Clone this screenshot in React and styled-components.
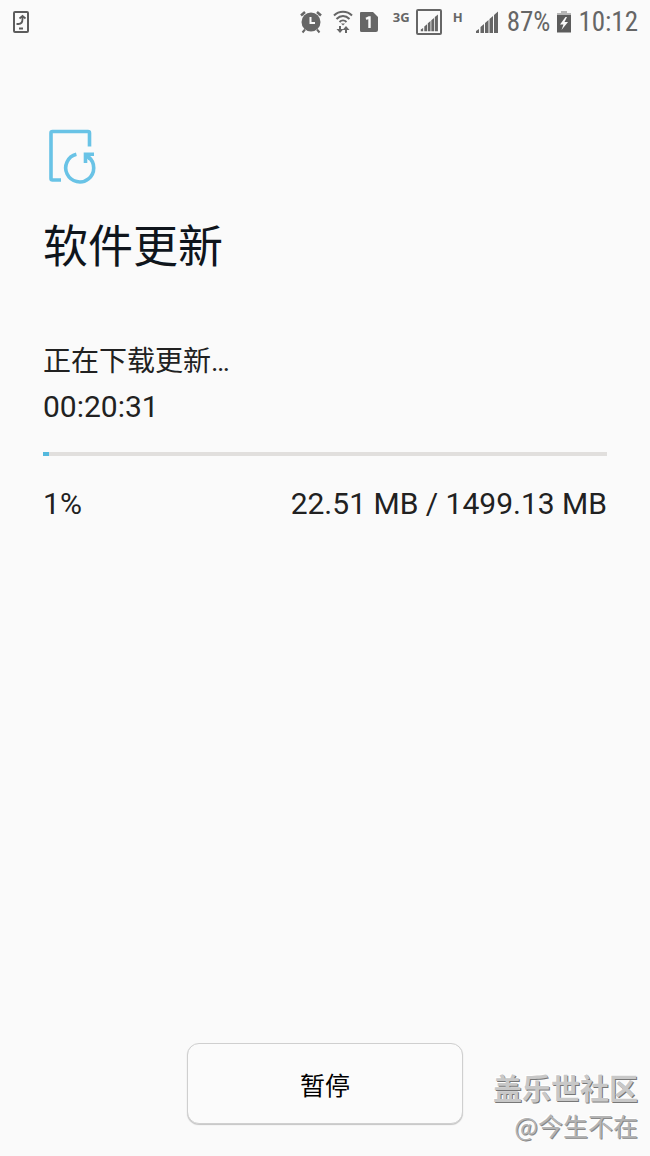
// src/App.jsx
// Software update screen: download progress with a pause button

import { useState } from "react";
import styled, { createGlobalStyle } from "styled-components";

const UPDATE = { percent: 1, timeLeft: "00:20:31", done: "22.51 MB", total: "1499.13 MB" };

function UpdateNoticeIcon() {
  return (
    <svg width="18" height="22" viewBox="0 0 18 22" fill="none" stroke="#5c5c5c" strokeWidth="2" aria-hidden="true">
      <rect x="2" y="1" width="14" height="20" rx="1" />
      <path d="M4.500 13h2c3 0 4-2 4-5V5M7.500 7.500 10.500 5l3 2.500" strokeWidth="1.800" />
      <path d="M7 17.500h4" />
    </svg>
  );
}

function AlarmIcon() {
  return (
    <svg width="22" height="24" viewBox="0 0 22 24" fill="none" stroke="#666" aria-hidden="true">
      <circle cx="11" cy="12" r="9.500" fill="#666" stroke="none" />
      <path d="M1 5.500 5 2M21 5.500 17 2" strokeWidth="2.500" />
      <path d="M5 19.500 2.500 22.500M17 19.500l2.500 3" strokeWidth="2" />
      <path d="M10.500 7v6H15" stroke="#fafafa" strokeWidth="2" />
    </svg>
  );
}

function WifiIcon() {
  return (
    <svg width="20" height="24" viewBox="0 0 20 24" fill="none" stroke="#666" strokeWidth="2" aria-hidden="true">
      <path d="M1 5.500C6 .500 14 .500 19 5.500M3.500 9c4-4 9-4 13 0M6.500 12c2-2 5-2 7 0" />
      <path d="M8 13.500h4l-2 2z" fill="#666" stroke="none" />
      <path d="M7 16v4M13 23v-4" />
      <path d="M3.500 19h7L7 23zM9.500 20h7L13 16z" fill="#666" stroke="none" />
    </svg>
  );
}

function SimIcon() {
  return (
    <svg width="20" height="22" viewBox="0 0 20 22" aria-hidden="true">
      <path d="M2 1h12l5 5v13a2 2 0 0 1-2 2H2.500A1.500 1.500 0 0 1 1 19.500V2a1 1 0 0 1 1-1z" fill="#666" />
      <path d="M7 7.800 10 6.500h.500V17" fill="none" stroke="#fafafa" strokeWidth="2.400" />
    </svg>
  );
}

function SignalIcon({ framed }) {
  return (
    <svg width="26" height="26" viewBox="0 0 26 26" fill="#666" aria-hidden="true">
      {framed && <rect x="1" y="1" width="24" height="24" rx="1" fill="none" stroke="#666" strokeWidth="2" />}
      <g transform={framed ? "translate(4 5) scale(.78)" : "translate(2 2)"}>
        <path d="M1 22v-2l3-2v4zM5.500 22v-6l3.500-3V22zM10 22V12l3.500-3v13zM14.500 22V8L18 5v17zM19 22V4L23 .500V22z" />
      </g>
    </svg>
  );
}

function BatteryIcon() {
  return (
    <svg width="16" height="22" viewBox="0 0 16 22" aria-hidden="true">
      <path d="M5 0h6v2h4v3H1V2h4z" fill="#b5b5b5" />
      <path d="M1 4h14v17.500H1z" fill="#5c5c5c" />
      <path d="M9.500 6 4 13.500h3.500L5.500 19l6.500-8H8.500L11 6z" fill="#fafafa" />
    </svg>
  );
}

function UpdateIcon() {
  return (
    <svg width="48" height="56" viewBox="0 0 48 56" fill="none" stroke="#69c3e6" strokeWidth="3.600" aria-hidden="true">
      <path d="M13 52H4.500A1.500 1.500 0 0 1 3 50.500V5A1.500 1.500 0 0 1 4.500 3.500H40A1.500 1.500 0 0 1 41.500 5v13.500" />
      <path d="M28.400 26.300A14 14 0 1 0 40.500 29" />
      <path d="M37.500 35V26.300H46" />
      <path d="m38 27 4 4" />
    </svg>
  );
}

export default function App() {
  const [paused, setPaused] = useState(false);

  return (
    <>
      <GlobalStyle />
      <Screen>
        <StatusBar>
          <UpdateNoticeIcon />
          <StatusGroup>
            <Indicators>
              <AlarmIcon />
              <Connections>
                <WifiIcon />
                <SimIcon />
              </Connections>
            </Indicators>
            <Network>
              <NetworkType>3G</NetworkType>
              <SignalIcon framed />
            </Network>
            <Network $wide>
              <NetworkType>H</NetworkType>
              <SignalIcon />
            </Network>
            <Power>
              <span>87%</span>
              <BatteryIcon />
              <time>10:12</time>
            </Power>
          </StatusGroup>
        </StatusBar>

        <Content>
          <UpdateIcon />
          <Title>软件更新</Title>
          <Status id="download-status">正在下载更新…</Status>
          <TimeLeft>{UPDATE.timeLeft}</TimeLeft>
          <Progress value={UPDATE.percent} max="100" aria-labelledby="download-status" />
          <Amounts>
            <span>{UPDATE.percent}%</span>
            <span>{UPDATE.done} / {UPDATE.total}</span>
          </Amounts>
        </Content>

        <Footer>
          <PauseButton type="button" aria-pressed={paused} onClick={() => setPaused(!paused)}>
            暂停
          </PauseButton>
        </Footer>

        <Watermark>
          <Community>盖乐世社区</Community>
          <Author>@今生不在</Author>
        </Watermark>
      </Screen>
    </>
  );
}

const GlobalStyle = createGlobalStyle`
  * { box-sizing: border-box; }
  body { margin: 0; background: #fafafa; font-family: Roboto, "Noto Sans CJK SC", sans-serif; color: #212121; }
  svg { display: block; flex-shrink: 0; }
`;

const Screen = styled.div`
  position: relative; display: flex; flex-direction: column; min-height: 100vh;
`;

const StatusBar = styled.header`
  display: flex; align-items: center; justify-content: space-between;
  height: 44px; padding: 0 12px; color: #666;
`;
const StatusGroup = styled.div`display: flex; align-items: center; gap: 8px;`;
const Indicators = styled.div`display: flex; align-items: center; gap: 11px;`;
const Connections = styled.div`display: flex; align-items: center; gap: 6px;`;
const Network = styled.div`
  display: flex; align-items: center; gap: ${({ $wide }) => ($wide ? "10px" : "6px")};
  margin-left: ${({ $wide }) => ($wide ? "3px" : "6px")};
`;
const NetworkType = styled.span`
  align-self: flex-start; font: 700 13px/16px "Open Sans", sans-serif;
`;
const Power = styled.div`
  display: flex; align-items: center; gap: 6px; line-height: 32px;
  font-family: "Roboto Condensed", Roboto, sans-serif; font-size: 27px;
`;

const Content = styled.main`
  flex: 1; padding: 84px 43px 0;
  > svg { margin-left: 5px; }
`;
const Title = styled.h1`
  margin: 32px 0 0; font-size: 45px; font-weight: 400; line-height: 64px; color: #0f151c;
`;
const Status = styled.p`margin: 60px 0 0; font-size: 28px; line-height: 44px;`;
const TimeLeft = styled.p`margin: 1px 0 0; font-size: 30px; line-height: 44px;`;

const Progress = styled.progress`
  display: block; width: 100%; height: 4px; margin: 23px 0 0;
  appearance: none; border: none; background: #e1dfdd;
  &::-webkit-progress-bar { background: #e1dfdd; }
  &::-webkit-progress-value { background: #54b9dd; }
`;
const Amounts = styled.div`
  display: flex; justify-content: space-between; margin-top: 26px;
  font-size: 30px; line-height: 44px;
`;

const Footer = styled.footer`display: flex; justify-content: center; padding: 0 24px 32px;`;
const PauseButton = styled.button`
  width: 276px; height: 81px; border: 1px solid #cfcfcf; border-radius: 12px;
  background: #fbfbfb; box-shadow: 0 1px 1px #c4c4c4; color: #000;
  font: 400 25px/36px "Noto Sans CJK SC", sans-serif; cursor: pointer;
`;

const Watermark = styled.aside`
  position: absolute; right: 12px; bottom: 13px; text-align: right; pointer-events: none;
  font-family: "Noto Sans CJK SC", sans-serif;
`;
const Community = styled.div`
  font-size: 29px; font-weight: 700; line-height: 40px; color: #c8c8c8;
  text-shadow: 1px 1px 0 #777, -1px -1px 0 #fff;
`;
const Author = styled.div`
  font-size: 25px; line-height: 36px; color: #b4b4b4;
  text-shadow: 1px 1px 0 #888, -1px -1px 0 #fff;
`;
